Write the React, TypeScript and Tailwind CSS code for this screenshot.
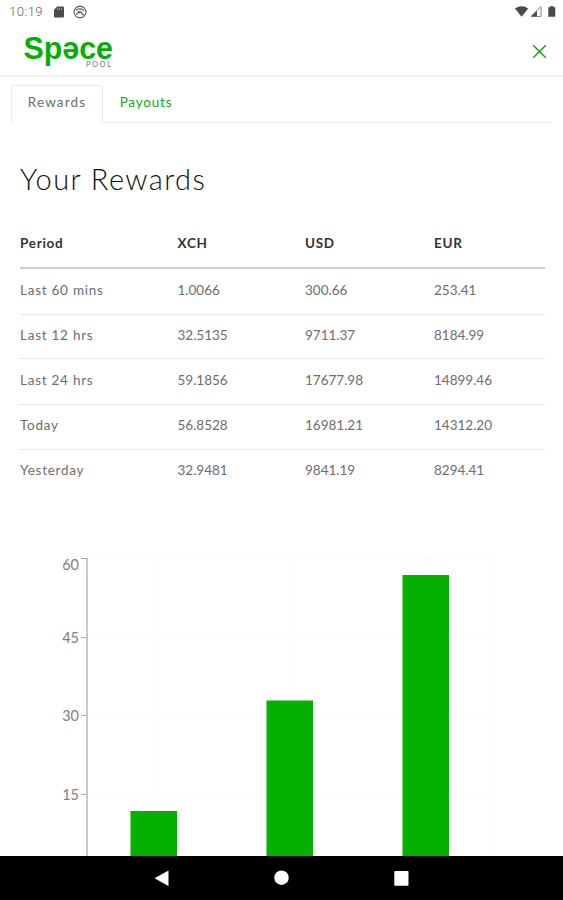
import clsx from "clsx";

interface Reward {
  period: string;
  xch: string;
  usd: string;
  eur: string;
  height: string;
}

const rewards: Reward[] = [
  { period: "Last 60 mins", xch: "1.0066", usd: "300.66", eur: "253.41", height: "h-[46px]" },
  { period: "Last 12 hrs", xch: "32.5135", usd: "9711.37", eur: "8184.99", height: "h-[44px]" },
  { period: "Last 24 hrs", xch: "59.1856", usd: "17677.98", eur: "14899.46", height: "h-[46px]" },
  { period: "Today", xch: "56.8528", usd: "16981.21", eur: "14312.20", height: "h-[45px]" },
  { period: "Yesterday", xch: "32.9481", usd: "9841.19", eur: "8294.41", height: "h-[43px]" }
];

const ticks = [
  { label: "60", y: 18.5, textY: 30 },
  { label: "45", y: 97.5, textY: 102.5 },
  { label: "30", y: 175.5, textY: 180.5 },
  { label: "15", y: 254.5, textY: 259.5 }
];

const bars = [
  { x: 130.5, y: 271 },
  { x: 266.5, y: 160.5 },
  { x: 402.5, y: 35 }
];

const columns = "grid grid-cols-[157.5px_127.5px_129px_1fr] items-center";

function StatusBar() {
  return (
    <div className="flex h-6 items-center pr-[6px] pl-[9px] text-[#606060]">
      <span className="w-[36px] font-[Roboto] text-[13px] font-light tracking-[0.5px]">10:19</span>
      <svg className="ml-[8px]" width="12" height="12" viewBox="0 0 12 12">
        <path d="M4.2 0.5H10a1 1 0 0 1 1 1v9a1 1 0 0 1-1 1H2a1 1 0 0 1-1-1V3.7z" fill="#4c4c4c" />
        <path d="M4.5 2v2M6.5 2v2M8.5 2v2" stroke="#aaa" strokeWidth="0.8" />
      </svg>
      <svg className="ml-[8px]" width="14" height="14" viewBox="0 0 14 14" fill="none" stroke="#5c5c5c">
        <circle cx="7" cy="7" r="5.9" strokeWidth="1.1" />
        <path d="M3 5.4C5 3.4 9 3.4 11 5.6M3.2 9.6L6 6.8M7.6 7.2l3.4 3" strokeWidth="1.3" />
        <path d="M5 6l4 .6-2.4 2.2z" fill="#5c5c5c" stroke="none" />
      </svg>
      <div className="flex-1" />
      <svg width="42" height="14" viewBox="0 0 42 14">
        <path d="M0 3.6C3.8 0.3 9.4 0.3 13.2 3.6L6.6 11.8z" fill="#4a4a4a" />
        <path d="M16 11.4L26 1.6V11.4z" fill="#fff" stroke="#777" strokeWidth="0.9" />
        <path d="M16 11.6L22 5.8V11.6z" fill="#4a4a4a" />
        <path d="M33.3 2.2h2V1h3v1.2h2v9.6h-7z" fill="#4a4a4a" />
      </svg>
    </div>
  );
}

function Header() {
  return (
    <header className="flex h-[53px] items-center justify-between border-b-2 border-[#f0f0f0] pr-[16px] pl-[23px]">
      <svg className="overflow-visible" width="92" height="40" viewBox="0 0 92 40" aria-label="Space Pool">
        <text
          x="0.5"
          y="28.5"
          textLength="89.5"
          lengthAdjust="spacingAndGlyphs"
          fill="#05ad05"
          className="font-['Liberation_Sans'] text-[32px] font-bold"
        >
          Spəce
        </text>
        <text x="63" y="37" textLength="25" fill="#777" className="font-[Lato] text-[7.5px]">
          POOL
        </text>
      </svg>
      <svg className="mt-[4px]" width="15" height="15" viewBox="0 0 15 15" stroke="#12a812" strokeWidth="1.5">
        <path d="M1.2 1.2L13.8 13.8M13.8 1.2L1.2 13.8" />
      </svg>
    </header>
  );
}

function Tabs() {
  return (
    <nav className="mr-[11px] ml-[11px] flex h-[46px] items-end border-b border-[#ededed] text-[13.5px]">
      <button className="-mb-px h-[38px] w-[92px] rounded-t-[3px] border border-b-0 border-[#e9e9e9] bg-white pb-[4px] tracking-[1.15px] text-[#6c6c6c]">
        Rewards
      </button>
      <button className="h-[37px] w-[86px] pb-[2px] tracking-[0.8px] text-[#12a812]">Payouts</button>
    </nav>
  );
}

function RewardsTable() {
  return (
    <div className="mr-[18px] ml-[20px] text-[13.5px]">
      <div className={clsx(columns, "h-[50px] border-b-2 border-[#cfcfcf] font-bold tracking-[0.7px] text-[#333]")}>
        <span>Period</span>
        <span>XCH</span>
        <span>USD</span>
        <span>EUR</span>
      </div>
      {rewards.map((r, i) => (
        <div
          key={r.period}
          className={clsx(
            columns,
            r.height,
            "pb-[3px] text-[#6e6e6e]",
            i < rewards.length - 1 && "border-b border-[#e6e6e6]"
          )}
        >
          <span className="tracking-[0.75px]">{r.period}</span>
          <span>{r.xch}</span>
          <span>{r.usd}</span>
          <span>{r.eur}</span>
        </div>
      ))}
    </div>
  );
}

function RewardsChart() {
  return (
    <svg className="block" width="563" height="316" viewBox="0 0 563 316">
      <g stroke="#f6f6f6" strokeDasharray="3 3">
        {ticks.map((t) => (
          <path key={t.label} d={`M87 ${t.y}H495`} />
        ))}
        {[153.5, 289.5, 425.5, 494.5].map((x) => (
          <path key={x} d={`M${x} 18V316`} />
        ))}
      </g>
      <path d="M87 18V316" stroke="#cacaca" strokeWidth="2" />
      {ticks.map((t) => (
        <g key={t.label}>
          <path d={`M81 ${t.y}H87`} stroke="#aaa" />
          <text x="79" y={t.textY} textAnchor="end" fill="#808080" className="text-[14.5px]">
            {t.label}
          </text>
        </g>
      ))}
      {bars.map((b) => (
        <rect key={b.x} x={b.x} y={b.y} width="46.5" height={316 - b.y} fill="#04b000" />
      ))}
    </svg>
  );
}

function NavigationBar() {
  return (
    <div className="h-[44px] bg-black">
      <svg width="563" height="44" viewBox="0 0 563 44" fill="#fff">
        <path d="M154.5 22.3L168.5 14.5V30z" />
        <circle cx="281.5" cy="21.7" r="7.2" />
        <rect x="394.3" y="15" width="14.2" height="14.8" rx="0.8" />
      </svg>
    </div>
  );
}

export default function App() {
  return (
    <div className="flex h-[900px] w-[563px] flex-col overflow-hidden bg-white font-[Lato,sans-serif]">
      <StatusBar />
      <Header />
      <Tabs />
      <main className="h-[733px] overflow-hidden">
        <h1 className="mt-[36px] mb-[20px] ml-[20px] h-[40px] text-[29px] leading-[40px] font-light tracking-[1.4px] text-[#111]">
          Your Rewards
        </h1>
        <RewardsTable />
        <div className="mt-[47px]">
          <RewardsChart />
        </div>
      </main>
      <NavigationBar />
    </div>
  );
}
